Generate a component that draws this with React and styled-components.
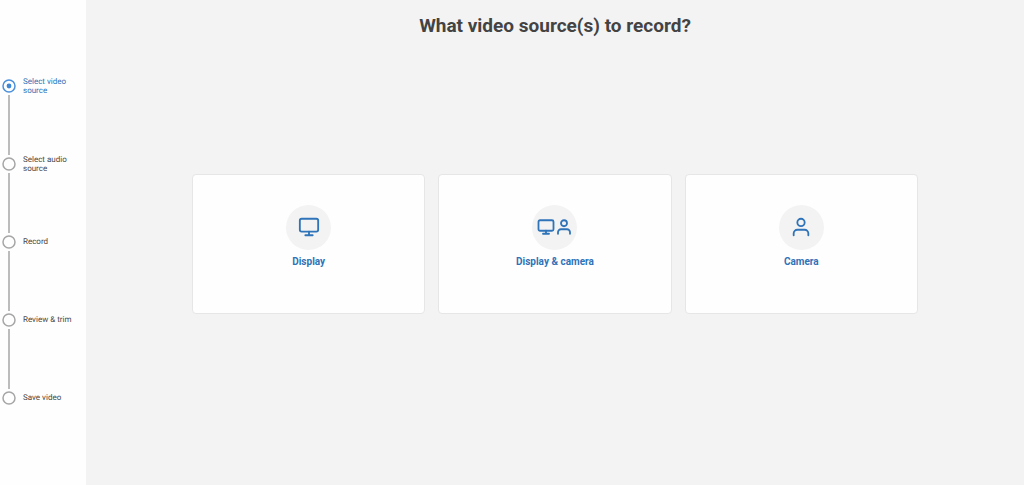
import React from "react";
import styled, { createGlobalStyle } from "styled-components";

const GlobalStyle = createGlobalStyle`
  * {
    box-sizing: border-box;
  }

  body {
    margin: 0;
    background-color: #f3f3f3;
    font-family: Roboto, "Liberation Sans", sans-serif;
  }
`;

const Container = styled.div`
  display: flex;
  min-height: 100vh;
`;

const Sidebar = styled.nav`
  display: flex;
  align-items: center;
  flex: 0 0 86px;
  padding: 0 2px 2px;
  background-color: #fefefe;
`;

const Steps = styled.ol`
  width: 100%;
  margin: 0;
  padding: 0;
  list-style: none;
`;

const Step = styled.li`
  color: ${(props) => (props.$active ? "#2f73b8" : "#484848")};
`;

const StepHeader = styled.div`
  display: flex;
  align-items: center;
  gap: 7px;
  height: 14px;
`;

const StepMarker = styled.svg`
  flex: none;
  fill: none;
  stroke: ${(props) => (props.$active ? "#4a90dc" : "#a6a6a6")};
  stroke-width: 1.5;
`;

const StepLabel = styled.span`
  width: 52px;
  font-size: 8px;
  line-height: 9px;
  text-rendering: geometricPrecision;
`;

const StepLine = styled.div`
  width: 2px;
  height: 60px;
  margin: 2px 6px;
  background-color: #bcbcbc;
`;

const Main = styled.main`
  display: flex;
  flex: 1;
  flex-direction: column;
  align-items: center;
  padding: 14px 24px 36px;
`;

const Heading = styled.h1`
  margin: 0;
  color: #434343;
  font-size: 19px;
  font-weight: 700;
  line-height: 24px;
  text-align: center;
`;

const Sources = styled.div`
  display: grid;
  grid-template-columns: repeat(3, 1fr);
  gap: 13px;
  width: 100%;
  max-width: 726px;
  margin: auto;
`;

const Card = styled.button`
  display: flex;
  flex-direction: column;
  align-items: center;
  gap: 5px;
  min-height: 140px;
  padding: 30px 12px;
  border: 1px solid #e6e6e6;
  border-radius: 4px;
  background-color: #fefefe;
  color: #2f73b8;
  font-family: inherit;
  font-size: 10px;
  font-weight: 700;
  line-height: 14px;
  cursor: pointer;
  &:hover {
    border-color: #2f73b8;
  }
`;

const IconCircle = styled.span`
  display: flex;
  align-items: center;
  justify-content: center;
  width: 45px;
  height: 45px;
  border-radius: 50%;
  background-color: #f3f3f3;
`;

const Icon = styled.svg`
  fill: none;
  stroke: currentColor;
  stroke-width: ${(props) => (props.$small ? 2.4 : 2)};
  stroke-linecap: round;
  stroke-linejoin: round;
`;

function DisplayIcon({ small }) {
  const size = small ? 18 : 22;
  return (
    <Icon
      $small={small}
      width={size}
      height={size}
      viewBox="0 0 24 24"
      aria-hidden="true"
    >
      <rect x="2" y="3" width="20" height="14" rx="2" />
      <path d="M8 21h8M12 17v4" />
    </Icon>
  );
}

function CameraIcon({ small }) {
  const size = small ? 18 : 22;
  return (
    <Icon
      $small={small}
      width={size}
      height={size}
      viewBox="0 0 24 24"
      aria-hidden="true"
    >
      <path d="M20 21v-2a4 4 0 0 0-4-4H8a4 4 0 0 0-4 4v2" />
      <circle cx="12" cy="7" r="4" />
    </Icon>
  );
}

const steps = [
  "Select video source",
  "Select audio source",
  "Record",
  "Review & trim",
  "Save video",
];

function App() {
  const current = 0;

  return (
    <Container>
      <GlobalStyle />
      <Sidebar>
        <Steps>
          {steps.map((label, i) => (
            <Step
              key={label}
              $active={i === current}
              aria-current={i === current ? "step" : undefined}
            >
              <StepHeader>
                <StepMarker
                  $active={i === current}
                  width="14"
                  height="14"
                  viewBox="0 0 14 14"
                  aria-hidden="true"
                >
                  <circle cx="7" cy="7" r="6" />
                  {i === current && (
                    <circle cx="7" cy="7" r="2.4" fill="#3d87d4" stroke="none" />
                  )}
                </StepMarker>
                <StepLabel>{label}</StepLabel>
              </StepHeader>
              {i < steps.length - 1 && <StepLine />}
            </Step>
          ))}
        </Steps>
      </Sidebar>
      <Main>
        <Heading>What video source(s) to record?</Heading>
        <Sources>
          <Card type="button">
            <IconCircle>
              <DisplayIcon />
            </IconCircle>
            Display
          </Card>
          <Card type="button">
            <IconCircle>
              <DisplayIcon small />
              <CameraIcon small />
            </IconCircle>
            Display &amp; camera
          </Card>
          <Card type="button">
            <IconCircle>
              <CameraIcon />
            </IconCircle>
            Camera
          </Card>
        </Sources>
      </Main>
    </Container>
  );
}

export default App;
